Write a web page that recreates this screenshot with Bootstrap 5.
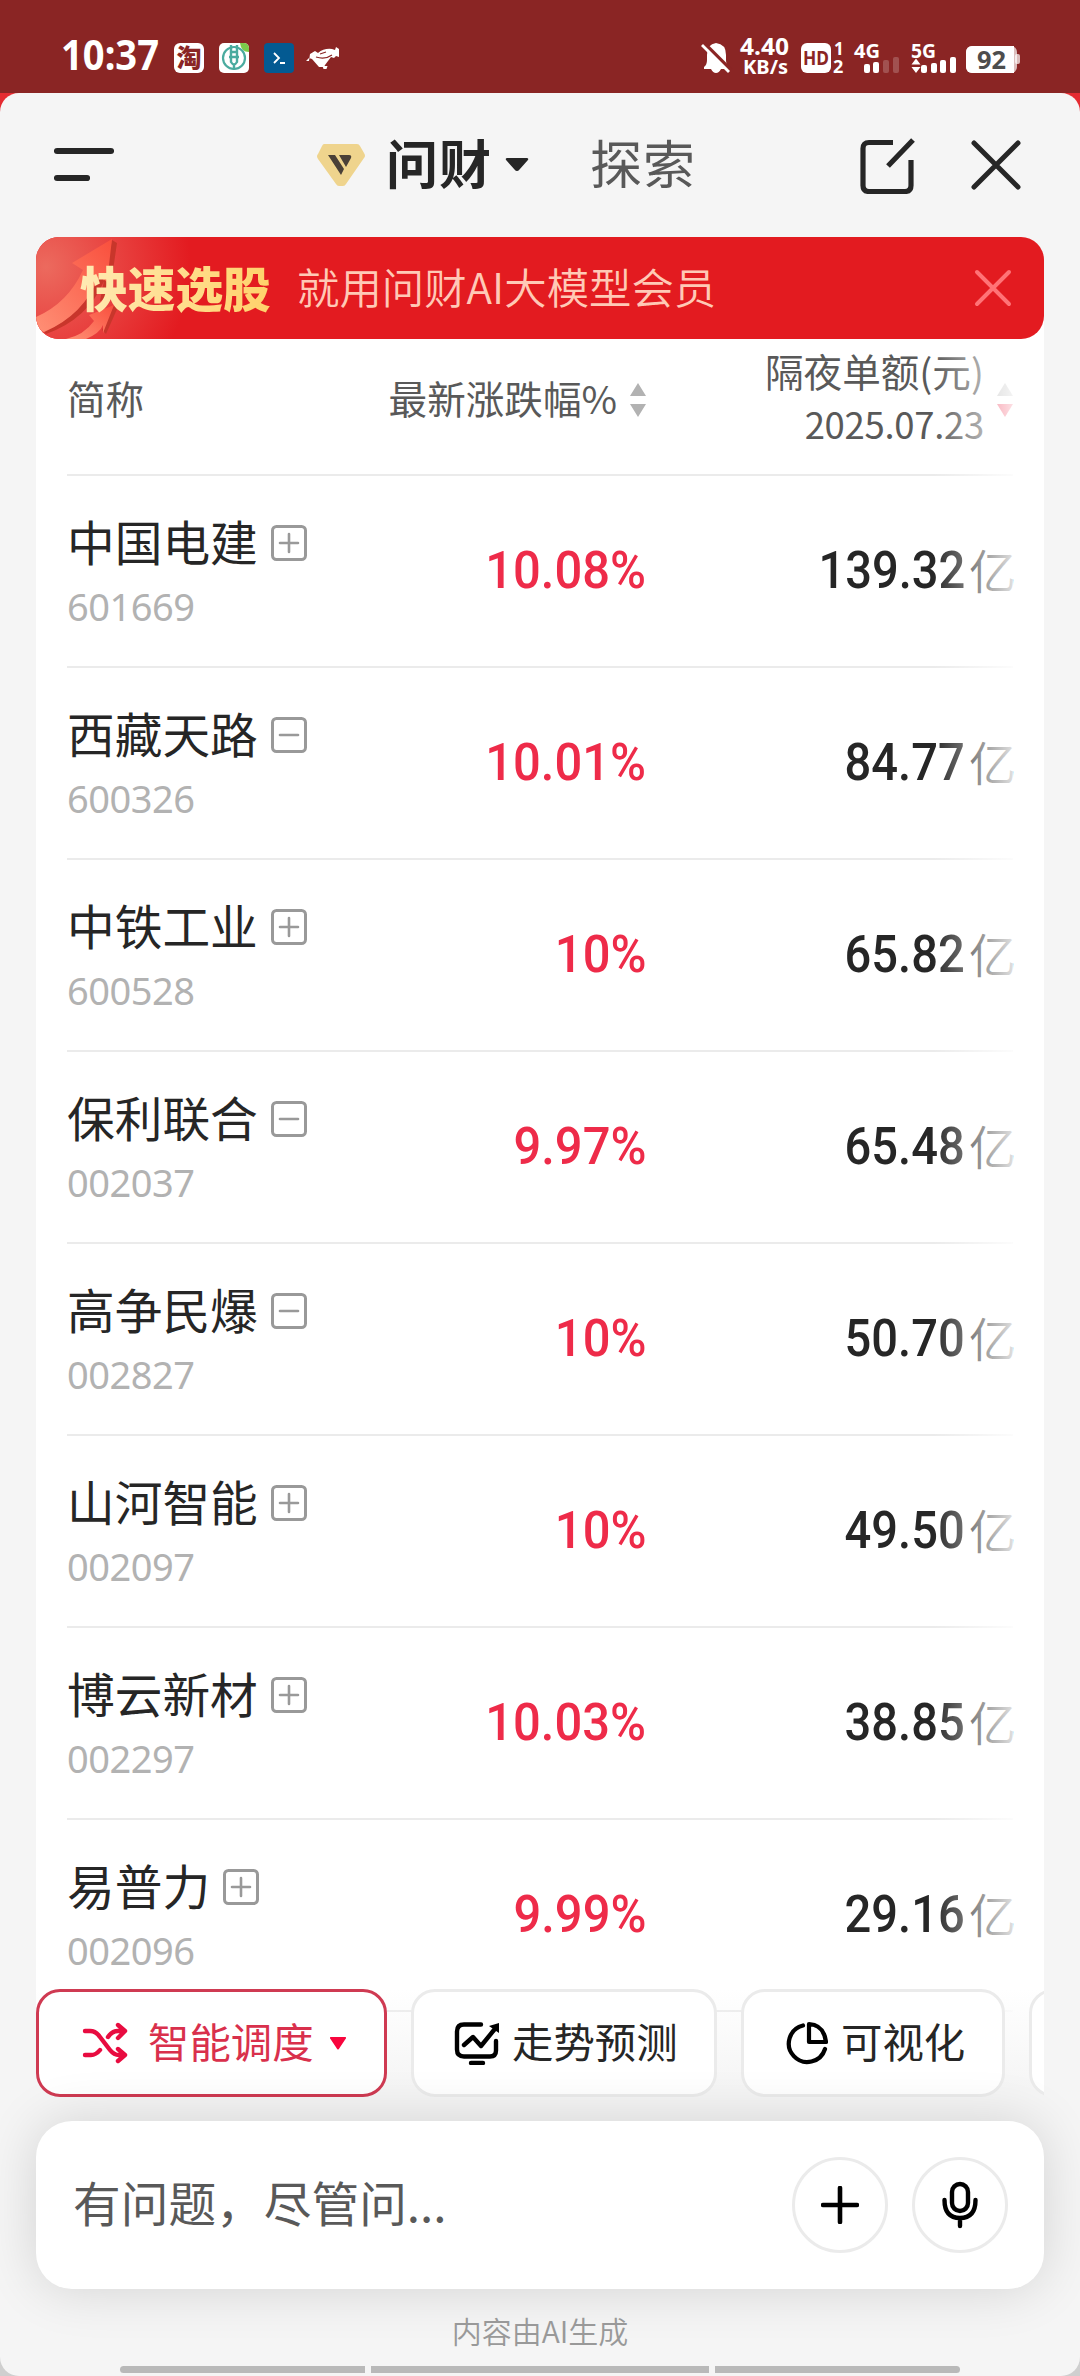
<!DOCTYPE html>
<html lang="zh-CN">
<head>
<meta charset="utf-8">
<meta name="viewport" content="width=device-width, initial-scale=1">
<title>问财</title>
<link href="https://cdn.jsdelivr.net/npm/bootstrap@5.3.0/dist/css/bootstrap.min.css" rel="stylesheet">
<style>
body{width:1080px;height:2376px;overflow:hidden;background:#d8d8d8;font-family:"Noto Sans CJK SC",sans-serif;color:#262626;line-height:1}
.phone{height:2376px;background:linear-gradient(#e52b31 0 200px,#cfcfcf 200px)}
svg{display:block;flex:none}
.status{height:93px;background:#8a2524;color:#fff;padding-left:60px;padding-right:60px;font-family:"Noto Sans",sans-serif}
.clock{width:114px}
.sheet{height:2283px;background:#f5f5f5;border-radius:19px;overflow:hidden}
.topbar{height:144px}
.tt{font-size:52px;letter-spacing:1px;white-space:nowrap;padding-bottom:6px}
.banner{height:102px;margin:0 36px;border-radius:23px;background:#e31b20;overflow:hidden;position:relative;z-index:2}
.banner .art{position:absolute;left:0;top:0}
.hot{position:relative;font-weight:900;font-size:47.7px;background:linear-gradient(90deg,#fff0c4,#ffce60);-webkit-background-clip:text;background-clip:text;color:transparent;padding:2px 0 4px 44px;width:261px;white-space:nowrap;line-height:1.1}
.slogan{font-size:42.4px;font-weight:350;color:#ffc9b6;white-space:nowrap;position:relative;padding-bottom:4px}
.board{margin:-30px 36px 0;background:#fff;height:1812px;padding:30px 31px 0;overflow:hidden;position:relative}
.thead-row{height:137px;border-bottom:2px solid #ebebeb;color:#595959;font-size:38.6px}
.stock{height:192px;border-bottom:2px solid #ebebeb}
.c1{width:240px}.c2{width:339px}.c3{width:367px}
.nm{font-size:47.7px;white-space:nowrap}
.nm span{padding-bottom:5px}
.code{font-family:"Noto Sans",sans-serif;font-size:38px;letter-spacing:-.5px;color:#b2b2b2;padding-top:17px}
.fig{font:500 52px/1 Roboto,sans-serif;transform:scaleX(.905);transform-origin:100% 50%;white-space:nowrap;display:inline-block}
.fig.rise{color:#ee2b49;transform:scaleX(.94)}
.yi{font-size:47px;font-weight:350;padding-bottom:6px;margin:0 -3px 0 4px}
.fader{position:absolute;right:31px;top:0;bottom:0;width:80px;background:linear-gradient(90deg,rgba(255,255,255,0),rgba(255,255,255,.85))}
.dock{position:relative;margin:-132px 0 0;height:387px}
.chips{height:132px;margin:0 36px;overflow:hidden;gap:24px;background:linear-gradient(rgba(245,245,245,0),#f5f5f5 75%)}
.chip{height:108px;border:3px solid #ebebeb;border-radius:24px;background:#fff;flex:none;font-size:41.4px;white-space:nowrap}
.chip span{padding-bottom:5px}
.chip.on{border-color:#cf3a52;color:#d9304c}
.ask{height:168px;margin:0 36px;border-radius:36px;background:#fff;box-shadow:0 0 54px rgba(0,0,0,.14);padding:0 36px 0 37px;color:#595959;font-size:47.7px;position:relative}
.ask span{padding-bottom:7px}
.rnd{width:96px;height:96px;border:3px solid #ebebeb;border-radius:50%}
.note{font-size:30px;font-weight:350;color:#999;height:77px;padding-top:26px;position:relative}
.homebar{height:7px;background:#b9b9b9}
</style>
<script src="https://cdn.jsdelivr.net/npm/bootstrap@5.3.0/dist/js/bootstrap.bundle.min.js"></script>
</head>
<body>
<div class="phone">
<header class="status d-flex">
  <div class="clock"><svg width="104" height="56" viewBox="0 0 104 56" style="margin-top:26px"><text x="1" y="44" font-family="Noto Sans" font-weight="700" font-size="40.500" fill="#fff" textLength="98" lengthAdjust="spacingAndGlyphs">10:37</text></svg></div>
  <svg width="170" height="40" viewBox="174 38 170 40" style="margin-top:38px">
    <rect x="174" y="43" width="30" height="30" rx="6" fill="#fff"/><text x="176.500" y="67" font-family="Noto Sans CJK SC" font-weight="900" font-size="25" fill="#8a2524">淘</text>
    <rect x="219" y="43" width="30" height="30" rx="5" fill="#fff"/><path d="M240 43h4a5 5 0 0 1 5 5v4q-8 0-9-9z" fill="#7ccb4a"/><circle cx="234" cy="58" r="11" fill="none" stroke="#4aab9f" stroke-width="2.200"/><path d="M231 45v7h6v-7M234 65v5M231 52v10q3 5 6 0v-10M229 57h10" stroke="#4aab9f" stroke-width="2.400" fill="none"/>
    <rect x="264" y="43" width="30" height="30" rx="4" fill="#035a92"/><path d="M274 53l5 5-5 5M280 63h5" fill="none" stroke="#fff" stroke-width="1.800"/>
    <path d="M309 61l1-7 5-3 3 2q6-5 14-4l3 1 1-3 3 2 0 8-3-1-2 2-3-1-6 8-1 2h-5l-7-8-3-1-3 3z" fill="#fff"/><path d="M316 57q9 3 16-2M320 54l6-2" stroke="#8a2524" fill="none" stroke-width="1.100"/><path d="M322.500 66h5l-1 3h-3z" fill="#fff"/>
  </svg>
  <svg class="ms-auto" width="320" height="60" viewBox="700 24 320 60" style="margin-top:24px" font-family="Noto Sans" font-weight="700" fill="#fff">
    <path d="M704 67q3-2 3-7v-5q0-11 9-12 10 1 10 12v5q0 5 3 7v2h-8q-2 4-5 4t-5-4h-7z"/><path d="M704 43l27 27" stroke="#8a2524" stroke-width="3.500"/><path d="M702 45l27 27" stroke="#fff" stroke-width="2.800"/>
    <text x="740" y="55" font-size="23" textLength="49" lengthAdjust="spacingAndGlyphs">4.40</text><text x="743" y="73.500" font-size="20" textLength="45" lengthAdjust="spacingAndGlyphs">KB/s</text>
    <rect x="801" y="43" width="30" height="30" rx="6"/><text x="803" y="65" font-size="19" fill="#8a2524" textLength="26" lengthAdjust="spacingAndGlyphs">HD</text>
    <text x="834" y="55" font-size="17">1</text><text x="833" y="73" font-size="18">2</text>
    <text x="854" y="58" font-size="20" textLength="26" lengthAdjust="spacingAndGlyphs">4G</text><rect x="864" y="64" width="6" height="9" rx="2"/><rect x="873" y="62" width="6" height="11" rx="2"/><g opacity=".2"><rect x="883" y="60" width="6" height="13" rx="2"/><rect x="893" y="57" width="6" height="16" rx="2"/></g>
    <text x="911" y="58" font-size="20" textLength="25" lengthAdjust="spacingAndGlyphs">5G</text><path d="M911.500 64.500l4.500-6 4.500 6zM911.500 67l4.500 6 4.500-6z"/><rect x="921" y="65" width="6" height="8" rx="2"/><rect x="931" y="63" width="6" height="10" rx="2"/><rect x="940" y="60" width="6" height="13" rx="2"/><rect x="950" y="57" width="6" height="16" rx="2"/>
    <rect x="966" y="46" width="51" height="27" rx="6" opacity=".7"/><rect x="1015" y="54" width="5" height="10" rx="2" opacity=".7"/><path d="M972 46h42v27h-42a6 6 0 0 1-6-6v-15a6 6 0 0 1 6-6z"/><text x="977" y="69" font-size="25" fill="#4d4d4d" textLength="29" lengthAdjust="spacingAndGlyphs">92</text>
  </svg>
</header>
<main class="sheet">
  <nav class="topbar d-flex align-items-center">
    <svg width="60" height="36" viewBox="0 0 60 36" style="margin-left:54px"><path d="M3 4h54M3 31h30" stroke="#262626" stroke-width="6.200" stroke-linecap="round"/></svg>
    <svg width="50" height="44" viewBox="0 0 50 44" style="margin-left:202px"><path d="M8 1h33q2 0 3 2l4 7q2 3 0 5L30 41q-1 2-3 2h-4q-2 0-3-2L2 16q-2-3 0-5l4-8q1-2 2-2z" fill="#efd48d"/><path d="M12 12h7l9 14-3 6zM23 12h10q3 0 2 3l-5 9z" fill="#4a4037"/></svg>
    <div class="tt fw-bold" style="margin-left:20px">问财</div>
    <svg width="24" height="14" viewBox="0 0 24 14" style="margin-left:13px"><path d="M2.500 0h19q3 0 1 2.500l-8 9q-2.500 3-5 0l-8-9Q-.5 0 2.500 0z" fill="#262626"/></svg>
    <div class="tt" style="margin-left:61px;color:#595959">探索</div>
    <svg width="56" height="58" viewBox="0 0 56 58" class="ms-auto"><path d="M33 6.500H9q-6 0-6 6v37q0 6 6 6h36q6 0 6-6V24M28 30l25-26" fill="none" stroke="#262626" stroke-width="5.200"/></svg>
    <svg width="50" height="50" viewBox="0 0 50 50" style="margin:0 59px 0 55px"><path d="M3 3l44 44M47 3L3 47" stroke="#262626" stroke-width="5" stroke-linecap="round"/></svg>
  </nav>
  <section class="banner d-flex align-items-center">
    <svg class="art" width="170" height="102" viewBox="0 0 170 102"><defs><radialGradient id="g1" gradientUnits="userSpaceOnUse" cx="10" cy="30" r="145"><stop offset="0" stop-color="#ec6a5e"/><stop offset=".5" stop-color="#e8413f"/><stop offset="1" stop-color="#e31b20"/></radialGradient><linearGradient id="g2" x1="0" y1="1" x2="1" y2="0"><stop offset="0" stop-color="#ff9076"/><stop offset="1" stop-color="#f94f3d"/></linearGradient></defs><rect width="170" height="102" fill="url(#g1)"/><path d="M76 3l5 3-8 55-9 3zM8 95Q46 78 64 38l4 6Q52 82 10 97z" fill="#c8362b"/><path d="M76 2L36 26l11 7Q32 66 0 80v12l8 3Q48 78 63 39l8 6z" fill="url(#g2)"/><path d="M78 68l4 2-12 27-4-4z" fill="#c8362b"/><path d="M78 68L53 78l5 6q-10 14-28 18h20q14-6 17-14l0 8z" fill="url(#g2)"/></svg>
    <div class="hot">快速选股</div><div class="slogan">就用问财AI大模型会员</div>
    <svg width="38" height="38" viewBox="0 0 38 38" class="ms-auto" style="margin-right:32px"><path d="M3 3l32 32M35 3L3 35" stroke="#ff7376" stroke-width="4" stroke-linecap="round"/></svg>
  </section>
  <section class="board">
    <div class="thead-row d-flex align-items-center">
      <div class="c1" style="padding-bottom:19px">简称</div>
      <div class="c2 d-flex justify-content-end align-items-center" style="padding-bottom:14px"><span class="text-nowrap" style="padding-bottom:5px">最新涨跌幅%</span><svg width="16" height="34" viewBox="0 0 16 34" style="margin-left:13px"><path d="M8 0l8 13H0zM0 21h16L8 34z" fill="#b2b2b2"/></svg></div>
      <div class="c3 d-flex justify-content-end align-items-center" style="padding-bottom:14px"><div class="text-end" style="padding-bottom:5px"><div class="text-nowrap">隔夜单额(元)</div><div style="font-size:36.5px;letter-spacing:-.3px;padding-top:16px">2025.07.23</div></div><svg width="16" height="34" viewBox="0 0 16 34" style="margin-left:13px"><path d="M8 0l8 13H0z" fill="#b2b2b2"/><path d="M0 21h16L8 34z" fill="#ee2b49"/></svg></div>
    </div>
    <div id="rows"></div>
    <div class="fader"></div>
  </section>
  <section class="dock">
    <div class="chips d-flex align-items-start">
      <div class="chip on d-flex align-items-center" style="width:351px;padding-left:43px">
        <svg width="46" height="42" viewBox="0 0 46 42"><path d="M3 9h5q6 0 10 6l10 13q4 5 9 5h5M3 33h6q5 0 9-5M26 15q4-6 10-6h6M36 3l7 6-7 7M36 27l7 6-7 6" fill="none" stroke="#e80c40" stroke-width="4.400" stroke-linecap="round" stroke-linejoin="round"/></svg>
        <span style="margin-left:20px">智能调度</span>
        <svg width="16" height="13" viewBox="0 0 16 13" style="margin-left:16px"><path d="M1 0h14q2 0 .5 2L9.500 11q-1.500 3-3 0L.5 2Q-1 0 1 0z" fill="#f8053d"/></svg>
      </div>
      <div class="chip d-flex align-items-center" style="width:306px;padding-left:40px">
        <svg width="46" height="44" viewBox="0 0 46 44"><path d="M27 3.500H10q-7 0-7 7v18q0 7 7 7h26q6 0 6-6V20M10 24l9-8 8 9 13-16M17 42h12" fill="none" stroke="#000" stroke-width="4.400" stroke-linecap="round" stroke-linejoin="round"/><path d="M45 2v10L35 5z"/></svg>
        <span style="margin-left:12px">走势预测</span>
      </div>
      <div class="chip d-flex align-items-center" style="width:264px;padding-left:42px">
        <svg width="42" height="44" viewBox="0 0 42 44"><path d="M17 4.500A18.500 18.500 0 1 0 39 28M23 3q15 1 17 18h-17z" fill="none" stroke="#000" stroke-width="4.200" stroke-linecap="round" stroke-linejoin="round"/></svg>
        <span style="margin-left:13px">可视化</span>
      </div>
      <div class="chip" style="width:200px"></div>
    </div>
    <div class="ask d-flex align-items-center">
      <span>有问题，尽管问...</span>
      <div class="rnd ms-auto d-flex align-items-center justify-content-center"><svg width="38" height="38" viewBox="0 0 38 38"><path d="M19 2v34M2 19h34" stroke="#000" stroke-width="4.600" stroke-linecap="round"/></svg></div>
      <div class="rnd d-flex align-items-center justify-content-center" style="margin-left:24px"><svg width="36" height="48" viewBox="0 0 36 48"><rect x="10" y="3" width="16" height="27" rx="8" fill="none" stroke="#000" stroke-width="4.400"/><path d="M2.500 19q0 18 15.500 18t15.500-18M18 37v8" fill="none" stroke="#000" stroke-width="4.400" stroke-linecap="round"/></svg></div>
    </div>
    <div class="note text-center">内容由AI生成</div>
    <div class="d-flex justify-content-center" style="gap:6px"><div class="homebar" style="width:245px;border-radius:4px 0 0 4px"></div><div class="homebar" style="width:338px"></div><div class="homebar" style="width:245px;border-radius:0 4px 4px 0"></div></div>
  </section>
</main>
</div>
<script>
const data=[["中国电建",1,"601669","10.08%","139.32"],["西藏天路",0,"600326","10.01%","84.77"],["中铁工业",1,"600528","10%","65.82"],["保利联合",0,"002037","9.97%","65.48"],["高争民爆",0,"002827","10%","50.70"],["山河智能",1,"002097","10%","49.50"],["博云新材",1,"002297","10.03%","38.85"],["易普力",1,"002096","9.99%","29.16"]];
document.getElementById("rows").innerHTML=data.map(r=>`<div class="stock d-flex align-items-center"><div class="c1"><div class="nm d-flex align-items-center"><span>${r[0]}</span><svg width="36" height="36" viewBox="0 0 36 36" style="margin-left:13px"><rect x="1.500" y="1.500" width="33" height="33" rx="4" fill="none" stroke="#999" stroke-width="3"/><path d="M9 18h18${r[1]?"M18 9v18":""}" stroke="#999" stroke-width="2.600" stroke-linecap="round"/></svg></div><div class="code">${r[2]}</div></div><div class="c2 text-end"><span class="fig rise">${r[3]}</span></div><div class="c3 d-flex justify-content-end align-items-center"><span class="fig">${r[4]}</span><span class="yi">亿</span></div></div>`).join("");
</script>
</body>
</html>
